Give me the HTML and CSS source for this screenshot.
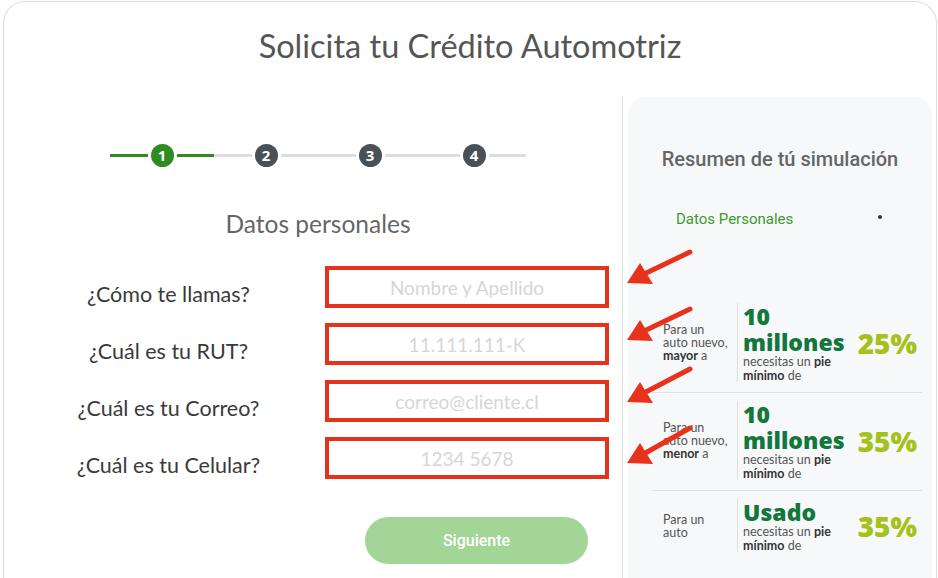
FILE: index.html
```html
<!DOCTYPE html>
<html lang="es">
<head>
<meta charset="utf-8">
<title>Solicita tu Crédito Automotriz</title>
<link rel="stylesheet" href="styles.css">
</head>
<body>
<div class="card">
  <h1 class="title">Solicita tu Crédito Automotriz</h1>
  <div class="content">
    <section class="main">
      <div class="steps-wrap">
        <div class="stepper">
          <div class="step active"><span class="bar"></span><span class="dot">1</span><span class="bar"></span></div>
          <div class="step"><span class="bar"></span><span class="dot">2</span><span class="bar"></span></div>
          <div class="step"><span class="bar"></span><span class="dot">3</span><span class="bar"></span></div>
          <div class="step"><span class="bar"></span><span class="dot">4</span><span class="bar"></span></div>
        </div>
        <h2 class="section-title">Datos personales</h2>
      </div>
      <form class="form">
        <div class="row"><label class="label">¿Cómo te llamas?</label><input class="field" type="text" placeholder="Nombre y Apellido"></div>
        <div class="row"><label class="label">¿Cuál es tu RUT?</label><input class="field" type="text" placeholder="11.111.111-K"></div>
        <div class="row"><label class="label">¿Cuál es tu Correo?</label><input class="field" type="text" placeholder="correo@cliente.cl"></div>
        <div class="row"><label class="label">¿Cuál es tu Celular?</label><input class="field" type="text" placeholder="1234 5678"></div>
        <button class="next" type="button">Siguiente</button>
      </form>
    </section>
    <aside class="side">
      <div class="panel">
        <h3 class="panel-title">Resumen de tú simulación</h3>
        <div class="panel-step"><span>Datos Personales</span><span class="bullet"></span></div>
        <div class="offers">
          <div class="offer">
            <div class="offer-cond"><p>Para un<br>auto nuevo,<br><b>mayor</b> a</p></div>
            <div class="offer-main">
              <div class="big">10</div>
              <div class="big">millones</div>
              <div class="small">necesitas un <b>pie</b></div>
              <div class="small"><b>mínimo</b> de</div>
            </div>
            <div class="pct">25%</div>
          </div>
          <div class="offer">
            <div class="offer-cond"><p>Para un<br>auto nuevo,<br><b>menor</b> a</p></div>
            <div class="offer-main">
              <div class="big">10</div>
              <div class="big">millones</div>
              <div class="small">necesitas un <b>pie</b></div>
              <div class="small"><b>mínimo</b> de</div>
            </div>
            <div class="pct">35%</div>
          </div>
          <div class="offer">
            <div class="offer-cond"><p>Para un<br>auto</p></div>
            <div class="offer-main">
              <div class="big">Usado</div>
              <div class="small">necesitas un <b>pie</b></div>
              <div class="small"><b>mínimo</b> de</div>
            </div>
            <div class="pct">35%</div>
          </div>
        </div>
      </div>
    </aside>
  </div>
</div>
<svg class="arrows" width="938" height="578" viewBox="0 0 938 578" aria-hidden="true">
  <g fill="#e8321b" stroke="#e8321b" stroke-width="5" stroke-linecap="round">
    <line x1="690" y1="252" x2="640" y2="276"/>
    <polygon stroke="none" points="627,283 653,284 640,263"/>
    <line x1="690" y1="309" x2="640" y2="333"/>
    <polygon stroke="none" points="627,340 653,341 640,320"/>
    <line x1="690" y1="369" x2="640" y2="395"/>
    <polygon stroke="none" points="627,402 653,403 640,382"/>
    <line x1="690" y1="428" x2="640" y2="456"/>
    <polygon stroke="none" points="627,463 653,464 640,443"/>
  </g>
</svg>
</body>
</html>
```

FILE: styles.css
```css
html, body {
  margin: 0;
  padding: 0;
  background: #ffffff;
  overflow: hidden;
  height: 578px;
}

body {
  font-family: Lato, "Open Sans", sans-serif;
  color: #444;
}

.card {
  margin: 1px 1px 0 3px;
  height: 577px;
  border: 1px solid #dcdcdc;
  border-bottom: none;
  border-radius: 22px 22px 0 0;
  box-sizing: border-box;
  overflow: hidden;
}

.title {
  margin: 0;
  height: 95px;
  padding-top: 21px;
  box-sizing: border-box;
  text-align: center;
  font-family: Lato, sans-serif;
  font-weight: 400;
  font-size: 32.5px;
  line-height: 46px;
  color: #555;
}

.content {
  display: grid;
  grid-template-columns: 618px 1fr;
  height: 481px;
}

/* ---------- left ---------- */
.main {
  display: flex;
  flex-direction: column;
}

.steps-wrap {
  margin: 47px 0 0 106px;
  width: 416px;
}

.stepper {
  display: flex;
}

.step {
  width: 104px;
  display: flex;
  align-items: center;
}

.bar {
  flex: 1;
  height: 3px;
  background: #dddddd;
}

.dot {
  width: 23px;
  height: 23px;
  margin: 0 3px;
  border-radius: 50%;
  background: #4a5057;
  color: #fff;
  font-family: "Open Sans", sans-serif;
  font-weight: 700;
  font-size: 15px;
  line-height: 23px;
  text-align: center;
}

.step.active .bar { background: #2e8b22; }
.step.active .dot { background: #2e8b22; }

.section-title {
  margin: 42px 0 0;
  text-align: center;
  font-weight: 400;
  font-size: 24.5px;
  line-height: 30px;
  color: #666;
}

.form {
  margin-top: 27px;
  display: flex;
  flex-direction: column;
  gap: 15px;
}

.row {
  display: grid;
  grid-template-columns: 321px 284px;
}

.label {
  padding: 14px 0 0 8px;
  text-align: center;
  font-size: 21.5px;
  line-height: 28px;
  color: #3a3a3a;
}

.field {
  width: 284px;
  height: 42px;
  box-sizing: border-box;
  border: 4px solid #e5321b;
  background: #fff;
  text-align: center;
  font-family: Lato, sans-serif;
  font-size: 19px;
  color: #444;
  outline: none;
  padding: 0 8px;
}

.field::placeholder { color: #d6d6d6; }

.next {
  margin: 23px 0 0 361px;
  width: 223px;
  height: 47px;
  border: none;
  border-radius: 24px;
  background: #a3d596;
  color: #fff;
  font-family: Roboto, sans-serif;
  font-weight: 500;
  font-size: 16px;
}

/* ---------- right ---------- */
.side {
  border-left: 1px solid #dcdcdc;
  padding: 0 4px 0 5px;
}

.panel {
  height: 100%;
  background: #f7f8fa;
  border-radius: 18px 18px 0 0;
  padding-top: 50px;
  box-sizing: border-box;
}

.panel-title {
  margin: 0;
  text-align: center;
  font-family: Roboto, sans-serif;
  font-weight: 500;
  font-size: 20px;
  line-height: 24px;
  color: #666;
}

.panel-step {
  margin-top: 38px;
  padding: 0 50px 0 48px;
  display: flex;
  justify-content: space-between;
  align-items: center;
  font-family: Roboto, sans-serif;
  font-size: 15px;
  line-height: 20px;
  color: #3d9a30;
}

.bullet {
  width: 4px;
  height: 4px;
  border-radius: 50%;
  background: #333;
  margin-bottom: 4px;
}

.offers {
  margin: 66px 10px 0 24px;
}

.offer {
  display: flex;
  padding: 8px 0 10px;
  border-bottom: 1px solid #e0e1e3;
}

.offer:last-child { border-bottom: none; }

.offer-cond {
  width: 74px;
  flex: none;
  padding-left: 11px;
  border-right: 1px solid #dedfe1;
  display: flex;
  align-items: center;
  font-size: 12.5px;
  line-height: 13px;
  color: #555;
}

.offer-cond p { margin: 0; }

.offer-cond b, .small b { color: #333; font-weight: 700; }

.offer-main {
  flex: 1;
  padding-left: 5px;
}

.big {
  font-family: "Open Sans", sans-serif;
  font-weight: 800;
  font-size: 23px;
  line-height: 26px;
  color: #12773c;
}

.small {
  font-size: 12.5px;
  line-height: 13.5px;
  color: #555;
}

.pct {
  display: flex;
  align-items: center;
  padding-right: 5px;
  font-family: "Open Sans", sans-serif;
  font-weight: 800;
  font-size: 28px;
  color: #a5c21b;
}

.arrows {
  position: absolute;
  left: 0;
  top: 0;
  pointer-events: none;
}
```
